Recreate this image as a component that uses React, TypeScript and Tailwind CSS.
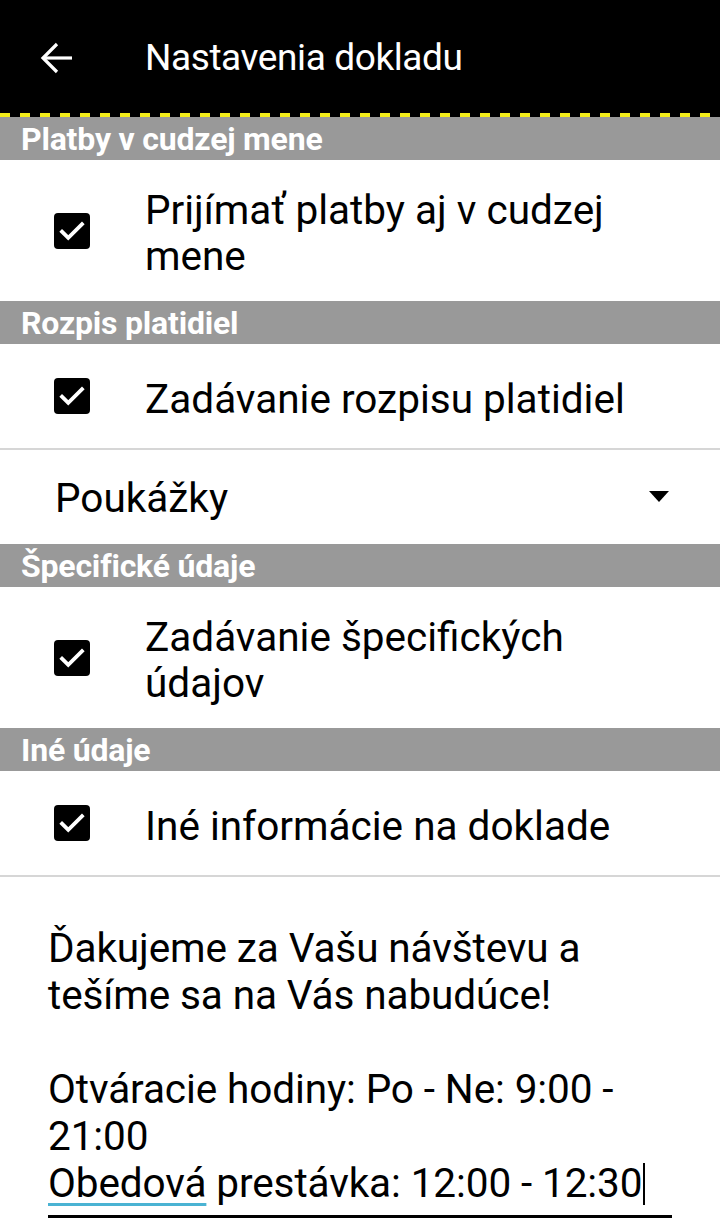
import React from "react";

function Check() {
  return (
    <span className="flex items-center justify-center w-[36px] h-[36px] rounded-[4px] bg-black shrink-0">
      <svg width="30" height="30" viewBox="0 0 24 24" fill="none">
        <path
          d="M4 12.5l5 5 11-11"
          stroke="white"
          strokeWidth="3"
          strokeLinecap="square"
        />
      </svg>
    </span>
  );
}

function Section({ title }: { title: string }) {
  return (
    <div className="h-[43px] bg-[#999999] flex items-center px-[21px] text-white font-bold text-[32px] leading-none tracking-[-0.2px]">
      {title}
    </div>
  );
}

function CheckRow({ label, tall }: { label: React.ReactNode; tall?: boolean }) {
  return (
    <div
      className={`flex items-center pl-[54px] pr-[20px] ${tall ? "h-[141px]" : "h-[104px]"}`}
    >
      <Check />
      <div className="ml-[55px] pt-[5px] text-[40.5px] leading-[46px] text-black">{label}</div>
    </div>
  );
}

export default function App() {
  return (
    <div
      className="w-[720px] h-[1231px] bg-white overflow-hidden"
      style={{ fontFamily: "Roboto, 'Noto Sans', sans-serif" }}
    >
      <header className="h-[113px] bg-black flex items-center">
        <svg width="34" height="34" viewBox="0 0 34 34" fill="none" className="ml-[39px] mt-[2px]">
          <path d="M33 17H4" stroke="white" strokeWidth="3.2" />
          <path d="M18 3L4 17l14 14" stroke="white" strokeWidth="3.2" />
        </svg>
        <h1 className="ml-[72px] mt-[2px] text-white text-[37px] tracking-[-0.4px] leading-none">
          Nastavenia dokladu
        </h1>
      </header>
      <div className="h-[4px] bg-[repeating-linear-gradient(90deg,#f2ec1a_0px,#f2ec1a_10px,#000_10px,#000_20px)]" />
      <Section title="Platby v cudzej mene" />
      <CheckRow tall label={<>Prijímať platby aj v cudzej<br />mene</>} />
      <Section title="Rozpis platidiel" />
      <CheckRow label="Zadávanie rozpisu platidiel" />
      <div className="h-[2px] bg-[#d6d6d6]" />
      <div className="h-[94px] flex items-center justify-between pl-[55px] pr-[51px]">
        <span className="text-[40.5px] text-black leading-none pt-[3px]">Poukážky</span>
        <svg width="20" height="12" viewBox="0 0 20 12">
          <path d="M0 0h20L10 11z" fill="black" />
        </svg>
      </div>
      <Section title="Špecifické údaje" />
      <CheckRow tall label={<>Zadávanie špecifických<br />údajov</>} />
      <Section title="Iné údaje" />
      <CheckRow label="Iné informácie na doklade" />
      <div className="h-[2px] bg-[#d6d6d6]" />
      <div className="px-[48px] pt-[48px]">
        <div className="text-[40.5px] leading-[47px] text-black whitespace-nowrap tracking-[-0.1px]">
          <div>Ďakujeme za Vašu návštevu a</div>
          <div>tešíme sa na Vás nabudúce!</div>
          <div>&nbsp;</div>
          <div>Otváracie hodiny: Po - Ne: 9:00 -</div>
          <div>21:00</div>
          <div className="flex items-center">
            <span className="underline decoration-[#4ab3d3] decoration-[3px] underline-offset-[6px]">
              Obedová
            </span>
            <span>&nbsp;prestávka: 12:00 - 12:30</span>
            <span className="inline-block w-[2px] h-[42px] bg-black ml-[1px]" />
          </div>
        </div>
        <div className="h-[3px] bg-black mt-[8px] w-[624px]" />
      </div>
    </div>
  );
}
